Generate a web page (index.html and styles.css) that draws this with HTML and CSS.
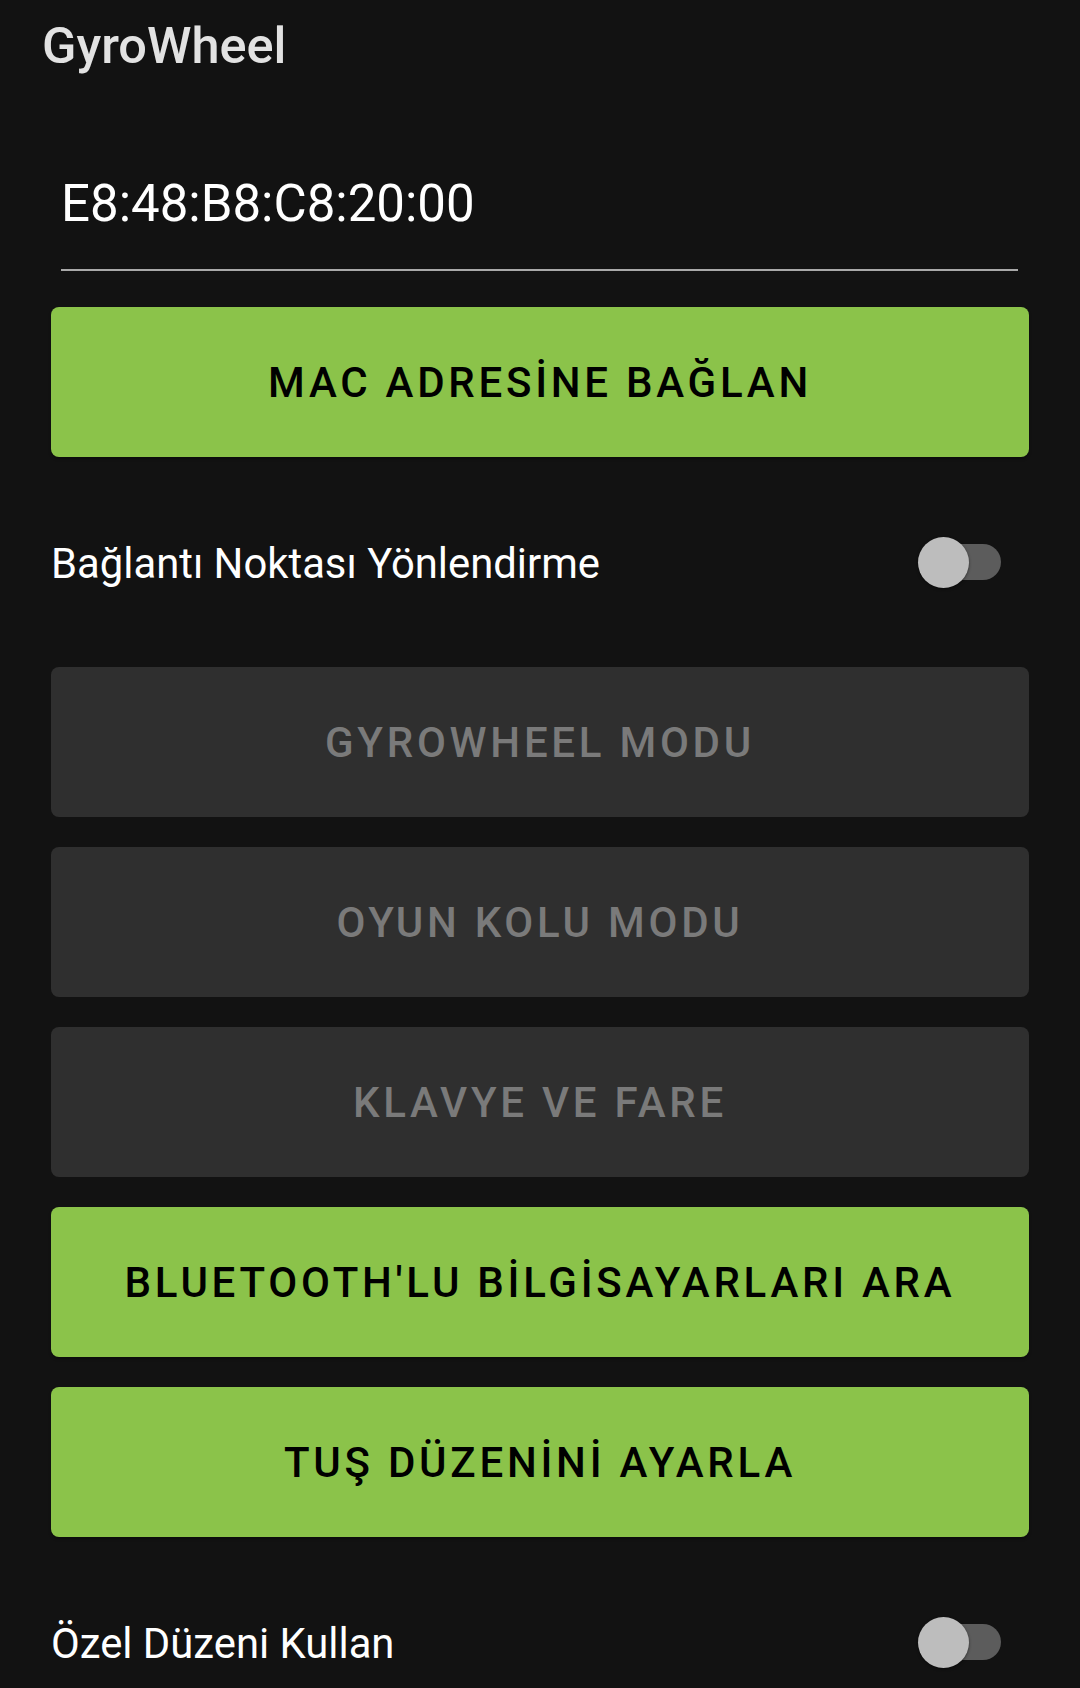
FILE: index.html
```html
<!DOCTYPE html>
<html lang="tr">
<head>
<meta charset="utf-8">
<title>GyroWheel</title>
<link rel="stylesheet" href="styles.css">
</head>
<body>
<div class="app">
  <header class="appbar">GyroWheel</header>
  <div class="mac-field">E8:48:B8:C8:20:00</div>
  <main class="content">
    <button class="btn btn-primary">MAC ADRESİNE BAĞLAN</button>
    <div class="switch-row">
      <span class="switch-label">Bağlantı Noktası Yönlendirme</span>
      <span class="switch"><span class="track"></span><span class="thumb"></span></span>
    </div>
    <div class="btn-stack">
      <button class="btn btn-disabled">GYROWHEEL MODU</button>
      <button class="btn btn-disabled">OYUN KOLU MODU</button>
      <button class="btn btn-disabled">KLAVYE VE FARE</button>
      <button class="btn btn-primary">BLUETOOTH'LU BİLGİSAYARLARI ARA</button>
      <button class="btn btn-primary">TUŞ DÜZENİNİ AYARLA</button>
    </div>
    <div class="switch-row">
      <span class="switch-label">Özel Düzeni Kullan</span>
      <span class="switch"><span class="track"></span><span class="thumb"></span></span>
    </div>
  </main>
</div>
</body>
</html>
```

FILE: styles.css
```css
html, body {
  margin: 0;
  padding: 0;
  background: #121212;
}
body {
  font-family: Roboto, "Noto Sans", sans-serif;
  color: #ffffff;
  overflow: hidden;
}
.app {
  display: flex;
  flex-direction: column;
}
.appbar {
  padding: 16px 0 0 42px;
  font-size: 50.5px;
  line-height: 59px;
  font-weight: 500;
  color: #e2e2e2;
}
.mac-field {
  margin: 98px 62px 0 61px;
  padding: 0 0 35px 0;
  font-size: 51px;
  line-height: 61px;
  color: #ffffff;
  border-bottom: 2px solid #a9a9a9;
}
.content {
  display: flex;
  flex-direction: column;
  margin: 36px 51px 0 51px;
}
.btn {
  display: flex;
  align-items: center;
  justify-content: center;
  height: 150px;
  width: 100%;
  border: none;
  border-radius: 8px;
  font-family: Roboto, "Noto Sans", sans-serif;
  font-size: 42px;
  font-weight: 500;
  letter-spacing: 3.75px;
  padding: 0;
  margin: 0;
}
.btn-primary {
  background: #8bc34a;
  color: #000000;
  box-shadow: 0 2px 3px rgba(0,0,0,0.35);
}
.btn-disabled {
  background: #2f2f2f;
  color: #7a7a7a;
}
.btn-stack {
  display: flex;
  flex-direction: column;
  gap: 30px;
}
.switch-row {
  display: flex;
  align-items: center;
  justify-content: space-between;
  height: 210px;
  padding: 0 28px 0 0;
}
.switch-label {
  font-size: 41.8px;
  color: #ffffff;
  padding-top: 3px;
}
.switch {
  position: relative;
  width: 83px;
  height: 51px;
}
.track {
  position: absolute;
  right: 0;
  top: 7px;
  width: 76px;
  height: 36px;
  border-radius: 18px;
  background: #5c5c5c;
}
.thumb {
  position: absolute;
  left: 0;
  top: 0;
  width: 51px;
  height: 51px;
  border-radius: 50%;
  background: #bdbdbd;
  box-shadow: 0 1px 3px rgba(0,0,0,0.5);
}
```
